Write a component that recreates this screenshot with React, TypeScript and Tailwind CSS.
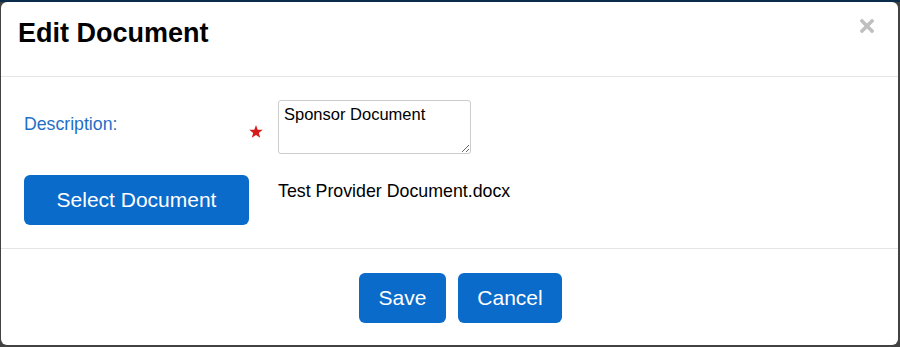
function CloseIcon() {
  return (
    <svg width="14" height="14" viewBox="0 0 14 14" className="block">
      <path d="M2 2 L12 12 M12 2 L2 12" stroke="#c0c0c0" strokeWidth="3.6" strokeLinecap="square" />
    </svg>
  );
}

function RequiredStar() {
  return (
    <svg width="14" height="13" viewBox="0 0 14 13" className="block">
      <polygon
        points="7,0 8.7,4.7 13.7,4.8 9.8,7.9 11.2,12.8 7,9.9 2.8,12.8 4.2,7.9 0.3,4.8 5.3,4.7"
        fill="#d41c1c"
      />
    </svg>
  );
}

export default function App() {
  return (
    <div
      className="w-[900px] h-[347px] bg-[#424242] border-t-2 border-[#0b2b4b] pl-[1px] pr-[2px] pb-[2px] flex"
      style={{ fontFamily: '"Liberation Sans", Arial, sans-serif' }}
    >
      <div className="flex-1 bg-white rounded-[6px] flex flex-col">
        {/* Header */}
        <div className="h-[75px] border-b border-[#e5e5e5] flex justify-between pl-[17px] pr-[24px]">
          <h1 className="mt-[18px] text-[27px] leading-[27px] font-bold text-black">Edit Document</h1>
          <button className="mt-[17px] self-start">
            <CloseIcon />
          </button>
        </div>

        {/* Body */}
        <div className="border-b border-[#e5e5e5] pt-[23px] pb-[23px] pl-[23px] grid grid-cols-[225px_29px_1fr] gap-y-[21px]">
          <label className="mt-[14px] text-[17.7px] leading-[20px] text-[#1f6fc6]">Description:</label>
          <div className="mt-[25px]">
            <RequiredStar />
          </div>
          <textarea
            defaultValue="Sponsor Document"
            className="w-[193px] h-[54px] border border-[#cccccc] rounded-[3px] pl-[5px] pt-[4px] text-[16.5px] leading-[19px] text-black outline-none"
          />

          <button className="h-[50px] rounded-[6px] bg-[#0a6bcb] text-white text-[21px]">Select Document</button>
          <div />
          <p className="mt-[6px] text-[17.8px] leading-[20px] text-black">Test Provider Document.docx</p>
        </div>

        {/* Footer */}
        <div className="pt-[24px] pl-[358px] flex gap-[12px]">
          <button className="w-[87px] h-[50px] rounded-[6px] bg-[#0a6bcb] text-white text-[21px]">Save</button>
          <button className="w-[104px] h-[50px] rounded-[6px] bg-[#0a6bcb] text-white text-[21px]">Cancel</button>
        </div>
      </div>
    </div>
  );
}
